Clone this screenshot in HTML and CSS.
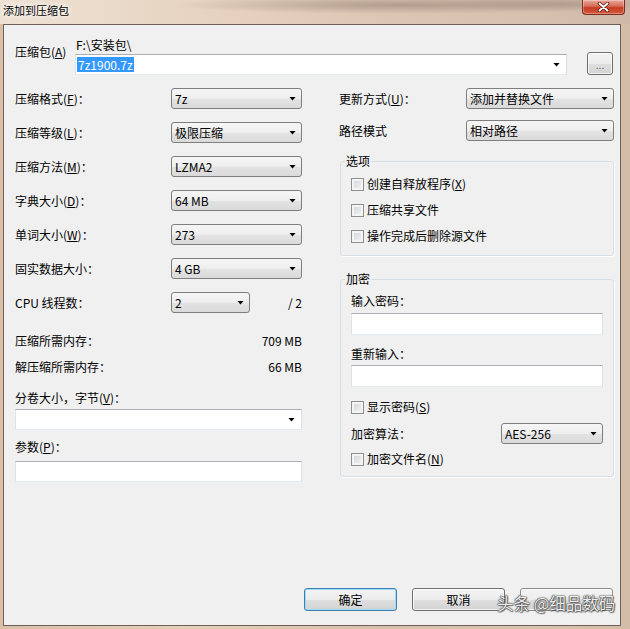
FILE: index.html
```html
<!DOCTYPE html>
<html lang="zh-CN">
<head>
    <meta charset="UTF-8">
    <title>添加到压缩包</title>
    <link rel="stylesheet" href="styles.css">
</head>
<body>
<div class="window">
    <div class="titlebar">
        <span class="title">添加到压缩包</span>
        <div class="close-btn">
            <svg width="13" height="10" viewBox="0 0 13 10">
                <path d="M2.5 1.5 L10.5 8.5 M10.5 1.5 L2.5 8.5" stroke="#5a1810" stroke-width="3.6" stroke-linecap="round"/>
                <path d="M2.5 1.5 L10.5 8.5 M10.5 1.5 L2.5 8.5" stroke="#fff" stroke-width="2" stroke-linecap="round"/>
            </svg>
        </div>
    </div>

    <div class="client">
        <!-- 压缩包路径 -->
        <div class="archive-row">
            <div class="archive-label">压缩包(<u>A</u>)</div>
            <div class="archive-main">
                <div class="archive-path">F:\安装包\</div>
                <div class="combo edit">
                    <span class="selected-text">7z1900.7z</span>
                    <span class="arrow"></span>
                </div>
            </div>
            <button class="btn browse">...</button>
        </div>

        <div class="columns">
            <!-- 左栏 -->
            <div class="col-left">
                <div class="field-grid">
                    <span>压缩格式(<u>F</u>)：</span>
                    <div class="combo"><span>7z</span><span class="arrow"></span></div>

                    <span>压缩等级(<u>L</u>)：</span>
                    <div class="combo"><span>极限压缩</span><span class="arrow"></span></div>

                    <span>压缩方法(<u>M</u>)：</span>
                    <div class="combo"><span>LZMA2</span><span class="arrow"></span></div>

                    <span>字典大小(<u>D</u>)：</span>
                    <div class="combo"><span>64 MB</span><span class="arrow"></span></div>

                    <span>单词大小(<u>W</u>)：</span>
                    <div class="combo"><span>273</span><span class="arrow"></span></div>

                    <span>固实数据大小：</span>
                    <div class="combo"><span>4 GB</span><span class="arrow"></span></div>

                    <span>CPU 线程数：</span>
                    <div class="cpu-row">
                        <div class="combo cpu"><span>2</span><span class="arrow"></span></div>
                        <span>/ 2</span>
                    </div>
                </div>

                <div class="memory">
                    <div class="mem-line"><span>压缩所需内存：</span><span>709 MB</span></div>
                    <div class="mem-line"><span>解压缩所需内存：</span><span>66 MB</span></div>
                </div>

                <div class="field-label split-label">分卷大小，字节(<u>V</u>)：</div>
                <div class="combo edit split-combo"><span></span><span class="arrow"></span></div>

                <div class="field-label param-label">参数(<u>P</u>)：</div>
                <div class="textbox param-box"></div>
            </div>

            <!-- 右栏 -->
            <div class="col-right">
                <div class="field-grid right-grid">
                    <span>更新方式(<u>U</u>)：</span>
                    <div class="combo"><span>添加并替换文件</span><span class="arrow"></span></div>

                    <span>路径模式</span>
                    <div class="combo"><span>相对路径</span><span class="arrow"></span></div>
                </div>

                <fieldset class="group options">
                    <legend>选项</legend>
                    <div class="group-body">
                        <div class="check-row"><span class="check"></span>创建自释放程序(<u>X</u>)</div>
                        <div class="check-row"><span class="check"></span>压缩共享文件</div>
                        <div class="check-row"><span class="check"></span>操作完成后删除源文件</div>
                    </div>
                </fieldset>

                <fieldset class="group encrypt">
                    <legend>加密</legend>
                    <div class="group-body">
                        <div class="field-label pw-label">输入密码：</div>
                        <div class="textbox pw-box"></div>
                        <div class="field-label pw-label2">重新输入：</div>
                        <div class="textbox pw-box2"></div>
                        <div class="check-row show-pw"><span class="check"></span>显示密码(<u>S</u>)</div>
                        <div class="algo-row">
                            <span>加密算法：</span>
                            <div class="combo algo"><span>AES-256</span><span class="arrow"></span></div>
                        </div>
                        <div class="check-row enc-names"><span class="check"></span>加密文件名(<u>N</u>)</div>
                    </div>
                </fieldset>
            </div>
        </div>

        <div class="buttons">
            <button class="btn default">确定</button>
            <button class="btn">取消</button>
            <button class="btn help"></button>
        </div>
    </div>

    <div class="watermark">头条 @细品数码</div>
</div>
</body>
</html>
```

FILE: styles.css
```css
* {
    box-sizing: border-box;
}
body {
    margin: 0;
    font-family: "Noto Sans CJK SC", sans-serif;
    font-size: 12px;
    color: #000;
    background: #d8c4b0;
}
u {
    text-decoration: underline;
    text-underline-offset: 1px;
}
.window {
    position: relative;
    width: 630px;
    height: 629px;
    display: flex;
    flex-direction: column;
    overflow: hidden;
    background: linear-gradient(to right, #d9bfa8, #e4cfbb 30%, #d6c0ad 60%, #d8c3b0 85%, #d3bca8);
}

/* 标题栏 */
.titlebar {
    height: 24px;
    display: flex;
    justify-content: space-between;
    align-items: flex-start;
    background:
        radial-gradient(ellipse 230px 9px at 400px 5px, rgba(125, 105, 95, 0.45), transparent),
        radial-gradient(ellipse 120px 8px at 560px 4px, rgba(125, 105, 95, 0.3), transparent),
        linear-gradient(to right, #eee2d4, #e6d2bf 35%, #dcc7b4 60%, #d6c1af 85%, #cfb8a6);
}
.title {
    font-size: 11px;
    line-height: 20px;
    padding-left: 3px;
    text-shadow: 0 0 5px #fff, 0 0 5px #fff;
}
.close-btn {
    width: 43px;
    height: 15px;
    margin-right: 5px;
    display: flex;
    align-items: center;
    justify-content: center;
    border: 1px solid #7a2c22;
    border-top: none;
    border-radius: 0 0 4px 4px;
    background: linear-gradient(#e9a99b, #d66a55 45%, #c43c22 55%, #d55a3e);
    box-shadow: inset 0 0 0 1px rgba(255, 255, 255, 0.3);
}

/* 客户区 */
.client {
    flex: 1;
    margin: 0 9px 3px 3px;
    border: 1px solid #6e6056;
    background: #f0f0f0;
    padding: 11px 6px 14px 11px;
    display: flex;
    flex-direction: column;
    line-height: 16px;
}
.archive-row {
    display: flex;
}
.archive-label {
    width: 60px;
    padding-top: 8px;
}
.archive-main {
    width: 492px;
}
.archive-path {
    line-height: 18px;
    padding-left: 1px;
}
.selected-text {
    background: #3399ff;
    color: #fff;
    line-height: 15px;
    padding: 0 1px;
}

/* 下拉框 */
.combo {
    height: 21px;
    display: flex;
    align-items: center;
    justify-content: space-between;
    padding: 0 5px 0 3px;
    border: 1px solid #7e7e7e;
    border-radius: 3px;
    background: linear-gradient(#f6f6f6 0%, #eeeeee 50%, #e3e3e3 51%, #dadada 100%);
    white-space: nowrap;
}
.combo.edit {
    padding: 0 6px 0 1px;
    border-radius: 0;
    background: #fff;
    border-color: #abadb3 #dbdfe6 #e3e9ef #e2e3ea;
}
.arrow {
    width: 7px;
    height: 4px;
    background: #000;
    clip-path: polygon(0 0, 100% 0, 50% 100%);
}
.textbox {
    height: 21px;
    background: #fff;
    border: 1px solid;
    border-color: #abadb3 #dbdfe6 #e3e9ef #e2e3ea;
}

/* 按钮 */
.btn {
    font-family: inherit;
    font-size: 12px;
    color: #000;
    width: 93px;
    height: 23px;
    padding: 0;
    border: 1px solid #707070;
    border-radius: 3px;
    background: linear-gradient(#f4f4f4 0%, #ececec 50%, #dfdfdf 51%, #d3d3d3 100%);
    box-shadow: inset 0 0 0 1px rgba(255, 255, 255, 0.7);
}
.btn.browse {
    width: 26px;
    margin: 16px 1px 0 20px;
    font-size: 10px;
    color: #606060;
    line-height: 14px;
    padding-top: 2px;
}
.btn.default {
    border-color: #3c7fb1;
    box-shadow: inset 0 0 0 1px #9fdcf8;
}
.btn.help {
    border-color: #8d8d8d;
}

/* 栏 */
.columns {
    display: flex;
    gap: 37px;
    margin-top: 13px;
}
.col-left {
    width: 287px;
}
.col-right {
    width: 275px;
}
.field-grid {
    display: grid;
    grid-template-columns: 156px 131px;
    grid-auto-rows: 21px;
    row-gap: 13px;
    align-items: center;
}
.right-grid {
    grid-template-columns: 127px 148px;
    row-gap: 11px;
}
.cpu-row {
    display: flex;
    justify-content: space-between;
    align-items: center;
}
.combo.cpu {
    width: 79px;
}
.memory {
    margin-top: 20px;
}
.mem-line {
    display: flex;
    justify-content: space-between;
}
.mem-line + .mem-line {
    margin-top: 10px;
}
.split-label {
    margin-top: 15px;
}
.split-combo {
    margin-top: 3px;
}
.param-label {
    margin-top: 9px;
}
.param-box {
    margin-top: 6px;
}

/* 分组框 */
.group {
    margin: 0 0 0 1px;
    padding: 0 10px 11px 4px;
    border: 1px solid #d5dfe5;
    border-radius: 3px;
    box-shadow: 1px 1px 0 #fff;
    min-width: 0;
}
.group legend {
    padding: 0 1px;
    line-height: 16px;
}
.group-body {
    padding-left: 6px;
}
.options {
    margin-top: 12px;
}
.encrypt {
    margin-top: 15px;
    padding-bottom: 9px;
}
.check-row {
    display: flex;
    align-items: center;
    height: 16px;
}
.options .check-row {
    margin-top: 10px;
}
.options .check-row:first-child {
    margin-top: 7px;
}
.check {
    width: 13px;
    height: 13px;
    margin-right: 3px;
    border: 1px solid #8e8f8f;
    background: linear-gradient(135deg, #cfd2d6 0%, #f6f6f6 100%);
    box-shadow: inset 0 0 0 2px #f4f4f4;
}
.pw-label {
    margin-top: 6px;
}
.pw-box {
    margin-top: 4px;
    height: 22px;
}
.pw-label2 {
    margin-top: 11px;
}
.pw-box2 {
    margin-top: 3px;
    height: 22px;
}
.show-pw {
    margin-top: 12px;
}
.algo-row {
    margin-top: 8px;
    display: flex;
    justify-content: space-between;
    align-items: center;
}
.combo.algo {
    width: 102px;
}
.enc-names {
    margin-top: 7px;
}

/* 底部按钮 */
.buttons {
    margin-top: auto;
    display: flex;
    justify-content: flex-end;
    gap: 15px;
    padding-right: 1px;
}
.watermark {
    position: absolute;
    left: 497px;
    top: 593px;
    font-size: 16.5px;
    line-height: 20px;
    color: #ececec;
    white-space: nowrap;
    text-shadow: 0 0 1px #333, 0 0 1px #333, 0 0 2px #555, 1px 1px 1px rgba(0, 0, 0, 0.4);
}
```
